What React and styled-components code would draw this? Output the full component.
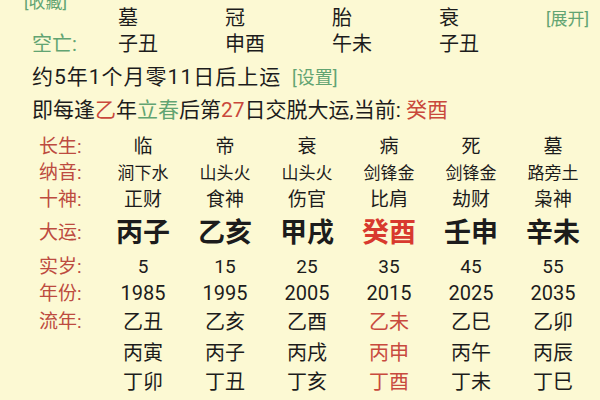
import styled, { createGlobalStyle } from "styled-components";

const GlobalStyle = createGlobalStyle`
  html, body {
    margin: 0;
    padding: 0;
    background: #fcf9d3;
    overflow: hidden;
  }
  body {
    font-family: Roboto, "Noto Sans CJK SC", sans-serif;
    color: #1c1c1c;
  }
`;

const Page = styled.div`
  width: 600px;
  height: 400px;
  overflow: hidden;
  background: #fcf9d3;
`;

const Link = styled.span`
  color: #62a472;
  font-size: ${(p) => p.size || 17}px;
  letter-spacing: 0;
`;

const TopBar = styled.div`
  height: 14px;
  line-height: 14px;
  margin-top: -5px;
  padding-left: 24px;
`;

const InfoGrid = styled.div`
  display: grid;
  grid-template-columns: 86px repeat(4, 107px) auto;
  padding-left: 32px;
  font-size: 20px;
`;

const InfoCell = styled.div`
  height: ${(p) => p.h}px;
  line-height: ${(p) => p.h}px;
  white-space: nowrap;
  color: ${(p) => (p.green ? "#62a472" : "inherit")};
`;

const Line = styled.div`
  height: 33px;
  line-height: 33px;
  padding-left: 32px;
  font-size: 21px;
  white-space: nowrap;
  letter-spacing: ${(p) => p.spacing || 0}px;
`;

const Red = styled.span`
  color: #c9483c;
`;

const Green = styled.span`
  color: #62a472;
`;

const Table = styled.div`
  margin-top: 7px;
  padding-left: 39px;
  display: grid;
  grid-template-columns: 63px repeat(6, 82px);
`;

const Label = styled.div`
  height: ${(p) => p.h}px;
  line-height: ${(p) => p.h}px;
  font-size: 19px;
  color: #bd4b40;
  white-space: nowrap;
`;

const Cell = styled.div`
  height: ${(p) => p.h}px;
  line-height: ${(p) => p.h}px;
  text-align: center;
  white-space: nowrap;
  font-size: ${(p) => p.size || 19}px;
  font-weight: ${(p) => (p.bold ? 700 : 400)};
  color: ${(p) => p.color || "#1c1c1c"};
`;

const rows = [
  { label: "长生:", h: 26, cells: ["临", "帝", "衰", "病", "死", "墓"] },
  { label: "纳音:", h: 26, size: 17, cells: ["涧下水", "山头火", "山头火", "剑锋金", "剑锋金", "路旁土"] },
  { label: "十神:", h: 27, cells: ["正财", "食神", "伤官", "比肩", "劫财", "枭神"] },
  { label: "大运:", h: 40, size: 27, bold: true, cells: ["丙子", "乙亥", "甲戌", "癸酉", "壬申", "辛未"] },
  { label: "实岁:", h: 28, size: 19, cells: ["5", "15", "25", "35", "45", "55"] },
  { label: "年份:", h: 25, size: 20, cells: ["1985", "1995", "2005", "2015", "2025", "2035"] },
  { label: "流年:", h: 32, size: 20, cells: ["乙丑", "乙亥", "乙酉", "乙未", "乙巳", "乙卯"] },
  { label: "", h: 30, size: 20, cells: ["丙寅", "丙子", "丙戌", "丙申", "丙午", "丙辰"] },
  { label: "", h: 29, size: 20, cells: ["丁卯", "丁丑", "丁亥", "丁酉", "丁未", "丁巳"] },
];

function cellColor(row, i) {
  if (i !== 3) return undefined;
  if (row.label === "大运:") return "#d8392e";
  if (row.label === "流年:" || row.label === "") return "#c84a3e";
  return undefined;
}

export default function App() {
  return (
    <Page>
      <GlobalStyle />
      <TopBar>
        <Link>[收藏]</Link>
      </TopBar>
      <InfoGrid>
        <InfoCell h={18} />
        <InfoCell h={18}>墓</InfoCell>
        <InfoCell h={18}>冠</InfoCell>
        <InfoCell h={18}>胎</InfoCell>
        <InfoCell h={18}>衰</InfoCell>
        <InfoCell h={18}>
          <Link>[展开]</Link>
        </InfoCell>
        <InfoCell h={34} green>
          空亡:
        </InfoCell>
        <InfoCell h={34}>子丑</InfoCell>
        <InfoCell h={34}>申酉</InfoCell>
        <InfoCell h={34}>午未</InfoCell>
        <InfoCell h={34}>子丑</InfoCell>
        <InfoCell h={34} />
      </InfoGrid>
      <Line spacing={1}>
        约5年1个月零11日后上运 <Link size={18}>&nbsp;[设置]</Link>
      </Line>
      <Line>
        即每逢<Red>乙</Red>年<Green>立春</Green>后第<Red>27</Red>日交脱大运,当前:{" "}
        <Red>癸酉</Red>
      </Line>
      <Table>
        {rows.map((row, r) => [
          <Label key={`l${r}`} h={row.h}>
            {row.label}
          </Label>,
          ...row.cells.map((c, i) => (
            <Cell
              key={`c${r}-${i}`}
              h={row.h}
              size={row.size}
              bold={row.bold}
              color={cellColor(row, i)}
            >
              {c}
            </Cell>
          )),
        ])}
      </Table>
    </Page>
  );
}
